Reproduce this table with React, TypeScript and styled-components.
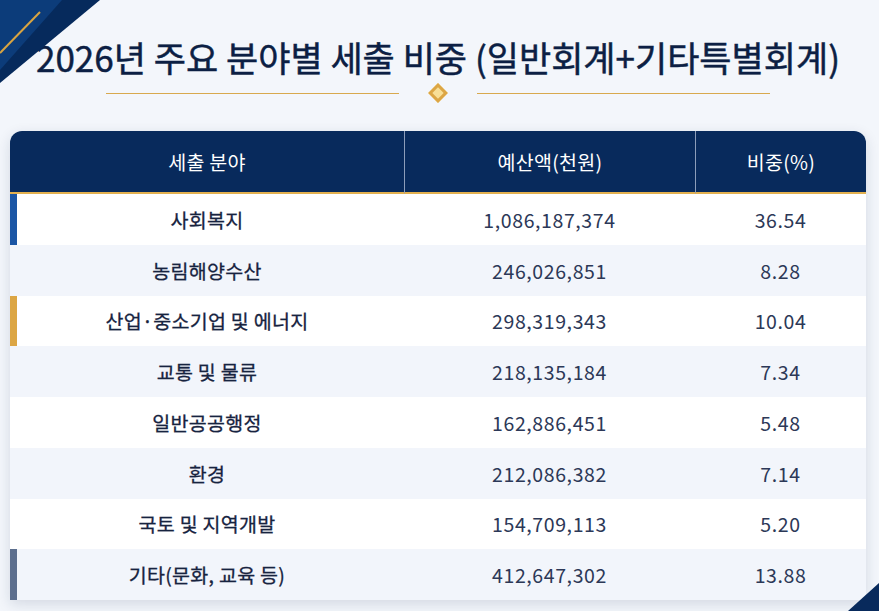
import React from "react";
import styled, { createGlobalStyle } from "styled-components";

const GlobalStyle = createGlobalStyle`
  html, body {
    margin: 0;
    padding: 0;
    background: #f3f6fb;
  }
  body {
    font-family: "Noto Sans CJK KR", "Noto Sans", sans-serif;
  }
`;

const Page = styled.div`
  position: relative;
  width: 879px;
  height: 611px;
  overflow: hidden;
  box-sizing: border-box;
  padding-top: 36px;
  background: #f3f6fb;
`;

const CornerTopLeft = styled.svg`
  position: absolute;
  top: 0;
  left: 0;
`;

const CornerBottomRight = styled.svg`
  position: absolute;
  right: 0;
  bottom: 0;
`;

const Title = styled.h1`
  margin: 0;
  padding-right: 3px;
  text-align: center;
  font-size: 35px;
  line-height: 42px;
  font-weight: 400;
  color: #0c1f44;
  -webkit-text-stroke: 0.5px #0c1f44;
`;

const Divider = styled.div`
  display: flex;
  align-items: center;
  justify-content: center;
  gap: 32px;
  height: 20px;
  margin-top: 5px;
  padding-right: 3px;
`;

const Line = styled.div`
  width: 293px;
  height: 1px;
  background: #d8a94e;
`;

const Diamond = styled.div`
  width: 14px;
  height: 14px;
  box-sizing: border-box;
  border: 3px solid #dca645;
  background: #f8df97;
  transform: rotate(45deg);
`;

const Card = styled.div`
  margin: 28px 13px 0 10px;
  border-radius: 12px 12px 0 0;
  overflow: hidden;
  background: #ffffff;
  box-shadow: 0 4px 14px rgba(20, 40, 80, 0.14);
`;

const Grid = styled.div`
  display: grid;
  grid-template-columns: 394px 291px 1fr;
`;

const HeadCell = styled.div<{ $divider?: boolean }>`
  height: 61px;
  display: flex;
  align-items: center;
  justify-content: center;
  background: #082a5c;
  color: #ffffff;
  font-size: 19.5px;
  font-weight: 400;
  letter-spacing: 0.3px;
  border-bottom: 2px solid #e2b04f;
  border-left: ${(p) => (p.$divider ? "1px solid #8c9dba" : "none")};
`;

const Cell = styled.div<{ $alt: boolean; $accent?: string; $strong?: boolean }>`
  height: 50.75px;
  display: flex;
  align-items: center;
  justify-content: center;
  background: ${(p) => (p.$alt ? "#f2f5fb" : "#ffffff")};
  color: ${(p) => (p.$strong ? "#17233f" : "#2c3857")};
  font-size: 19.5px;
  letter-spacing: ${(p) => (p.$strong ? "0.3px" : "0.6px")};
  font-weight: 400;
  -webkit-text-stroke: ${(p) => (p.$strong ? "0.3px #17233f" : "0")};
  box-shadow: ${(p) => (p.$accent ? `inset 7px 0 0 ${p.$accent}` : "none")};
`;

interface Row {
  name: string;
  amount: string;
  share: string;
  accent?: string;
}

const rows: Row[] = [
  { name: "사회복지", amount: "1,086,187,374", share: "36.54", accent: "#1b56a5" },
  { name: "농림해양수산", amount: "246,026,851", share: "8.28" },
  { name: "산업·중소기업 및 에너지", amount: "298,319,343", share: "10.04", accent: "#dca645" },
  { name: "교통 및 물류", amount: "218,135,184", share: "7.34" },
  { name: "일반공공행정", amount: "162,886,451", share: "5.48" },
  { name: "환경", amount: "212,086,382", share: "7.14" },
  { name: "국토 및 지역개발", amount: "154,709,113", share: "5.20" },
  { name: "기타(문화, 교육 등)", amount: "412,647,302", share: "13.88", accent: "#5d6f8e" },
];

const App = (): JSX.Element => {
  return (
    <>
      <GlobalStyle />
      <Page>
        <CornerTopLeft width="110" height="90" viewBox="0 0 110 90">
          <polygon points="0,0 100,0 0,83" fill="#062a5c" />
          <polygon points="0,0 62,0 0,70" fill="#0c3c7a" />
          <line x1="40" y1="12" x2="0" y2="53" stroke="#d9a441" strokeWidth="2" />
        </CornerTopLeft>
        <CornerBottomRight width="32" height="28" viewBox="0 0 32 28">
          <polygon points="32,0 32,28 1,28" fill="#082a5c" />
        </CornerBottomRight>

        <Title>2026년 주요 분야별 세출 비중 (일반회계+기타특별회계)</Title>
        <Divider>
          <Line />
          <Diamond />
          <Line />
        </Divider>

        <Card>
          <Grid>
            <HeadCell>세출 분야</HeadCell>
            <HeadCell $divider>예산액(천원)</HeadCell>
            <HeadCell $divider>비중(%)</HeadCell>
            {rows.map((row, i) => (
              <React.Fragment key={row.name}>
                <Cell $alt={i % 2 === 1} $accent={row.accent} $strong>
                  {row.name}
                </Cell>
                <Cell $alt={i % 2 === 1}>{row.amount}</Cell>
                <Cell $alt={i % 2 === 1}>{row.share}</Cell>
              </React.Fragment>
            ))}
          </Grid>
        </Card>
      </Page>
    </>
  );
};

export default App;
